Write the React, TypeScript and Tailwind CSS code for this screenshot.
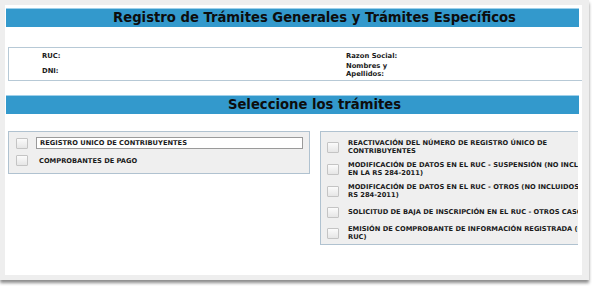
import React from "react";

const font = { fontFamily: '"DejaVu Sans", Verdana, sans-serif' };

const leftItems = ["REGISTRO UNICO DE CONTRIBUYENTES", "COMPROBANTES DE PAGO"];

const rightItems = [
  ["REACTIVACIÓN DEL NÚMERO DE REGISTRO ÚNICO DE", "CONTRIBUYENTES"],
  ["MODIFICACIÓN DE DATOS EN EL RUC - SUSPENSIÓN (NO INCLUIDOS", "EN LA RS 284-2011)"],
  ["MODIFICACIÓN DE DATOS EN EL RUC - OTROS (NO INCLUIDOS EN LA", "RS 284-2011)"],
  ["SOLICITUD DE BAJA DE INSCRIPCIÓN EN EL RUC - OTROS CASOS"],
  ["EMISIÓN DE COMPROBANTE DE INFORMACIÓN REGISTRADA (CONSULTA", "RUC)"],
];

function Box() {
  return (
    <span className="block w-[12px] h-[11px] shrink-0 border border-[#c4c4c4] bg-gradient-to-b from-[#fbfbfb] to-[#e6e6e6] rounded-[1px]" />
  );
}

function Bar({ title }: { title: string }) {
  return (
    <div className="ml-[1px] w-[573px] h-[19px] bg-[#3399cc] border-t border-[#9fd0ea] flex items-center justify-center pl-[44px]">
      <span className="text-[13.2px] font-bold text-[#0d0d0d] whitespace-nowrap leading-none">{title}</span>
    </div>
  );
}

export default function App() {
  return (
    <div className="w-[592px] h-[286px] bg-white" style={font}>
      <div className="w-[589px] h-[280px] bg-[#eeeeee] pt-[5px] pl-[5px] shadow-[0_3px_3px_rgba(0,0,0,0.45)]">
        <div className="w-[577px] h-[270px] bg-white overflow-hidden pt-[3px]">
          <Bar title="Registro de Trámites Generales y Trámites Específicos" />

          <div className="mt-[20px] ml-[3px] w-[576px] h-[34px] border border-r-0 border-[#b7c9d6] flex text-[6.8px] font-bold text-[#1a1a1a] leading-[8px]">
            <div className="w-[337px] pl-[33px] pt-[4px] flex flex-col gap-[7px]">
              <span>RUC:</span>
              <span>DNI:</span>
            </div>
            <div className="pt-[4px] flex flex-col gap-[2px]">
              <span>Razon Social:</span>
              <span>
                Nombres y
                <br />
                Apellidos:
              </span>
            </div>
          </div>

          <div className="mt-[14px]">
            <Bar title="Seleccione los trámites" />
          </div>

          <div className="mt-[17px] ml-[3px] flex items-start gap-[10px] text-[6.7px] font-bold text-[#1a1a1a] leading-[8px]">
            <div className="w-[302px] h-[43px] shrink-0 bg-[#efefef] border border-[#b0c2d0] pl-[7px] pr-[6px] pt-[5px] flex flex-col gap-[6px]">
              {leftItems.map((t, i) => (
                <div key={t} className="flex items-center gap-[8px]">
                  <Box />
                  <span
                    className={
                      i === 0
                        ? "flex-1 h-[12px] bg-white border border-[#9a9a9a] pl-[3px] flex items-center"
                        : "pl-[3px]"
                    }
                  >
                    {t}
                  </span>
                </div>
              ))}
            </div>

            <div className="w-[258px] h-[114px] shrink-0 overflow-hidden bg-[#efefef] border border-r-0 border-[#b0c2d0] pl-[6px] pt-[7px] flex flex-col gap-[6px]">
              {rightItems.map((lines) => (
                <div
                  key={lines[0]}
                  className={`flex items-center gap-[9px] ${lines.length > 1 ? "min-h-[16px]" : "min-h-[14px]"}`}
                >
                  <Box />
                  <span className="whitespace-nowrap">
                    {lines.map((l, j) => (
                      <React.Fragment key={l}>
                        {j > 0 && <br />}
                        {l}
                      </React.Fragment>
                    ))}
                  </span>
                </div>
              ))}
            </div>
          </div>
        </div>
      </div>
    </div>
  );
}
